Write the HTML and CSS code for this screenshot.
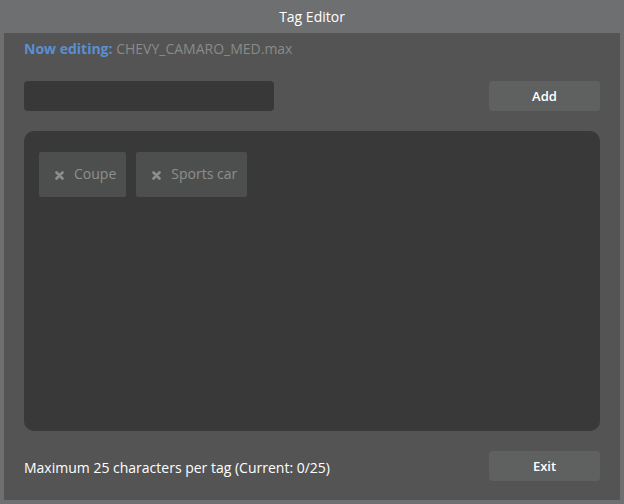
FILE: index.html
```html
<!DOCTYPE html>
<html lang="en">
<head>
    <meta charset="UTF-8">
    <title>Tag Editor</title>
    <link rel="stylesheet" href="styles.css">
</head>
<body>
    <div class="title-bar">Tag Editor</div>
    <div class="panel">
        <div class="editing">
            <span class="editing-label">Now editing:</span>
            <span class="editing-file">CHEVY_CAMARO_MED.max</span>
        </div>

        <div class="add-row">
            <input type="text" class="tag-input" />
            <button class="btn">Add</button>
        </div>

        <div class="tag-area">
            <div class="tag">
                <svg class="tag-x" width="9" height="9" viewBox="0 0 9 9"><path d="M1.5 1.5L7.5 7.5M7.5 1.5L1.5 7.5" stroke="#8d8f8e" stroke-width="2.6" stroke-linecap="round"/></svg>
                <span>Coupe</span>
            </div>
            <div class="tag">
                <svg class="tag-x" width="9" height="9" viewBox="0 0 9 9"><path d="M1.5 1.5L7.5 7.5M7.5 1.5L1.5 7.5" stroke="#8d8f8e" stroke-width="2.6" stroke-linecap="round"/></svg>
                <span>Sports car</span>
            </div>
        </div>

        <div class="footer">
            <span class="limit">Maximum 25 characters per tag (Current: 0/25)</span>
            <button class="btn">Exit</button>
        </div>
    </div>
</body>
</html>
```

FILE: styles.css
```css
body {
    margin: 0;
    background: #6e6f71;
    font-family: "Open Sans", sans-serif;
    font-size: 14px;
}
.title-bar {
    height: 33px;
    line-height: 33px;
    text-align: center;
    color: #ffffff;
    font-size: 14px;
}
.panel {
    margin: 0 4px;
    height: 442px;
    background: #545454;
    padding: 6px 20px 19px 20px;
}
.editing {
    height: 20px;
    line-height: 20px;
}
.editing-label {
    color: #5a8fd2;
    font-weight: bold;
}
.editing-file {
    color: #8a8a8a;
}
.add-row {
    display: flex;
    justify-content: space-between;
    margin-top: 22px;
    height: 30px;
}
.tag-input {
    width: 250px;
    height: 30px;
    box-sizing: border-box;
    border: none;
    border-radius: 4px;
    background: #383838;
    color: #dddddd;
    padding: 0 8px;
    outline: none;
}
.btn {
    width: 111px;
    height: 30px;
    border: none;
    border-radius: 4px;
    background: #5f6160;
    color: #ffffff;
    font-family: "Open Sans", sans-serif;
    font-size: 13px;
    font-weight: 600;
    cursor: pointer;
}
.tag-area {
    margin-top: 20px;
    height: 300px;
    box-sizing: border-box;
    background: #393939;
    border-radius: 10px;
    padding: 21px 15px;
    display: flex;
    align-items: flex-start;
    gap: 10px;
}
.tag {
    height: 45px;
    box-sizing: border-box;
    display: flex;
    align-items: center;
    gap: 10px;
    padding: 0 10px 2px 16px;
    background: #4d4f4e;
    border-radius: 2px;
    color: #8d8f8e;
}
.tag-x {
    margin-top: 3px;
}
.footer {
    display: flex;
    justify-content: space-between;
    align-items: center;
    margin-top: 20px;
    height: 30px;
}
.limit {
    color: #ffffff;
    padding-top: 2px;
}
```
